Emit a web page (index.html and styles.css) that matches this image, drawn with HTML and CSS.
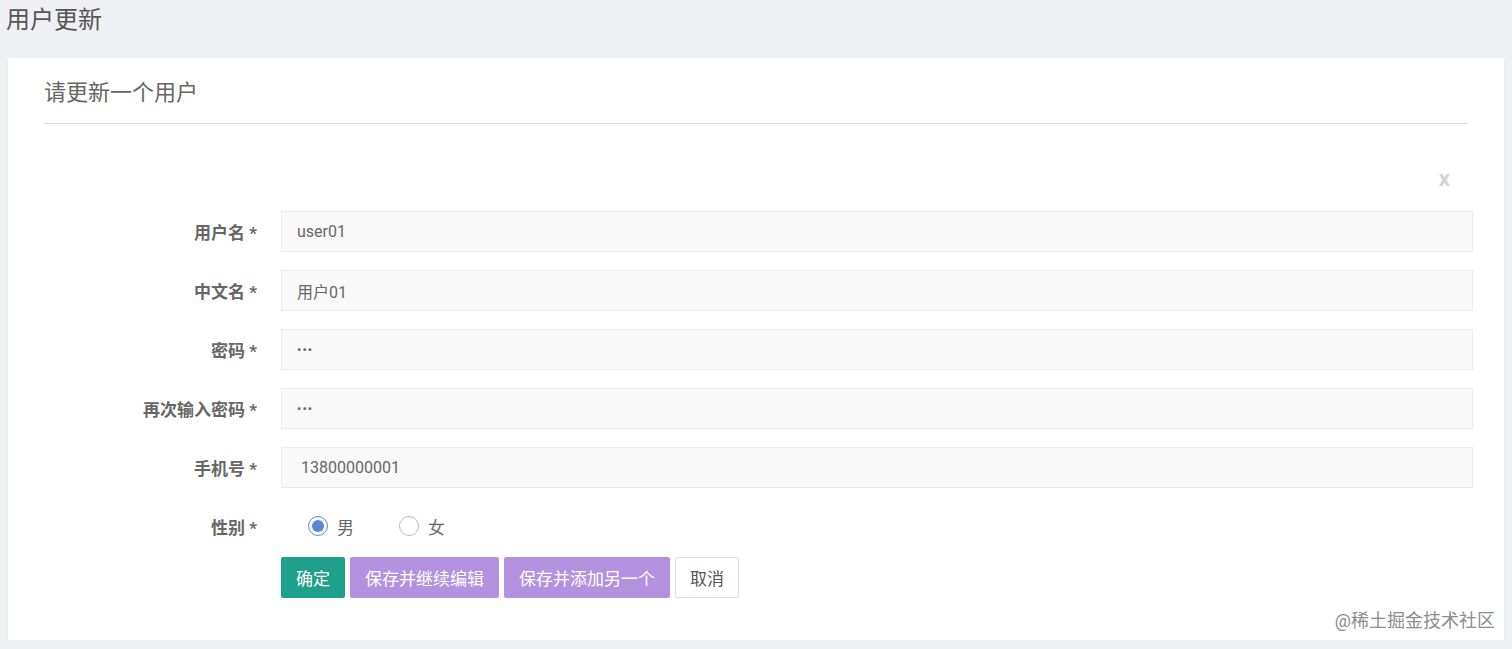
FILE: index.html
```html
<!DOCTYPE html>
<html lang="zh-CN">
<head>
    <meta charset="UTF-8">
    <meta name="viewport" content="width=device-width, initial-scale=1.0">
    <title>用户更新</title>
    <link rel="stylesheet" href="styles.css">
</head>
<body>

<div class="page-title">用户更新</div>

<div class="card">
    <div class="card-header">请更新一个用户</div>

    <div class="close-row"><span class="close">x</span></div>

    <form class="user-form">
        <div class="form-row">
            <label for="username">用户名 *</label>
            <input type="text" id="username" value="user01">
        </div>
        <div class="form-row">
            <label for="cnname">中文名 *</label>
            <input type="text" id="cnname" value="用户01">
        </div>
        <div class="form-row">
            <label for="pwd">密码 *</label>
            <input type="password" id="pwd" value="123">
        </div>
        <div class="form-row">
            <label for="pwd2">再次输入密码 *</label>
            <input type="password" id="pwd2" value="123">
        </div>
        <div class="form-row">
            <label for="mobile">手机号 *</label>
            <input type="text" id="mobile" class="mobile" value="13800000001">
        </div>
        <div class="form-row radio-row">
            <label>性别 *</label>
            <div class="radios">
                <span class="radio checked"></span><span class="radio-text">男</span>
                <span class="radio"></span><span class="radio-text">女</span>
            </div>
        </div>
        <div class="form-row button-row">
            <span class="spacer"></span>
            <div class="buttons">
                <button type="button" class="btn btn-ok">确定</button>
                <button type="button" class="btn btn-purple">保存并继续编辑</button>
                <button type="button" class="btn btn-purple">保存并添加另一个</button>
                <button type="button" class="btn btn-cancel">取消</button>
            </div>
        </div>
    </form>

    <div class="watermark">@稀土掘金技术社区</div>
</div>

</body>
</html>
```

FILE: styles.css
```css
/* 전체 */
body {
    margin: 0;
    background-color: #eef0f3;
    font-family: Roboto, "Noto Sans CJK SC", sans-serif;
    color: #666;
}

.page-title {
    font-size: 24px;
    color: #555;
    padding: 4px 0 0 6px;
    height: 54px;
    line-height: 32px;
}

/* 카드 */
.card {
    position: relative;
    background-color: #fff;
    margin: 0 8px;
    padding: 0 31px 42px 36px;
    box-shadow: 0 1px 2px rgba(0, 0, 0, 0.06);
}

.card-header {
    font-size: 22px;
    color: #666;
    padding-top: 20px;
    height: 45px;
    line-height: 30px;
    border-bottom: 1px solid #ddd;
    margin-right: 6px;
}

.close-row {
    height: 87px;
    text-align: right;
}

.close {
    display: inline-block;
    margin-top: 42px;
    margin-right: 23px;
    font-size: 22px;
    font-weight: bold;
    color: #d3d3d3;
    line-height: 26px;
}

/* 폼 */
.user-form {
    display: flex;
    flex-direction: column;
    gap: 18px;
}

.form-row {
    display: flex;
    align-items: center;
    padding-left: 8px;
}

.form-row label,
.spacer {
    width: 205px;
    flex-shrink: 0;
    text-align: right;
    font-weight: bold;
    font-size: 17px;
    color: #666;
    margin-right: 24px;
}

.form-row input {
    flex: 1;
    height: 41px;
    box-sizing: border-box;
    border: 1px solid #ebebeb;
    background-color: #f9f9f9;
    padding: 0 15px;
    font-size: 16px;
    font-family: Roboto, "Noto Sans CJK SC", sans-serif;
    color: #666;
    outline: none;
}

.form-row input[type="password"] {
    font-size: 13px;
    letter-spacing: 1px;
}

.form-row input.mobile {
    padding-left: 19px;
}

.radio-row {
    height: 40px;
}

.radios {
    display: flex;
    align-items: center;
    padding-left: 27px;
    font-size: 17px;
    color: #666;
}

.radio {
    width: 18px;
    height: 18px;
    border: 1px solid #bbb;
    border-radius: 50%;
    box-sizing: content-box;
    position: relative;
    margin-right: 9px;
}

.radio.checked {
    border-color: #5b86d6;
}

.radio.checked::after {
    content: "";
    position: absolute;
    left: 3px;
    top: 3px;
    width: 12px;
    height: 12px;
    border-radius: 50%;
    background-color: #5b86d6;
}

.radio-text {
    margin-right: 45px;
}

.button-row {
    margin-top: -7px;
}

.buttons {
    display: flex;
    gap: 5px;
}

.btn {
    height: 41px;
    padding: 0 15px;
    border: none;
    border-radius: 2px;
    font-size: 17px;
    font-family: Roboto, "Noto Sans CJK SC", sans-serif;
    color: #fff;
    cursor: pointer;
}

.btn-ok {
    width: 64px;
    padding: 0;
    background-color: #1fa08c;
}

.btn-purple {
    background-color: #b491df;
}

.btn-cancel {
    width: 64px;
    padding: 0;
    background-color: #fff;
    border: 1px solid #ddd;
    color: #555;
}

/* 워터마크 */
.watermark {
    position: absolute;
    right: 9px;
    bottom: 8px;
    font-size: 18px;
    color: #8c8c8c;
}
```
